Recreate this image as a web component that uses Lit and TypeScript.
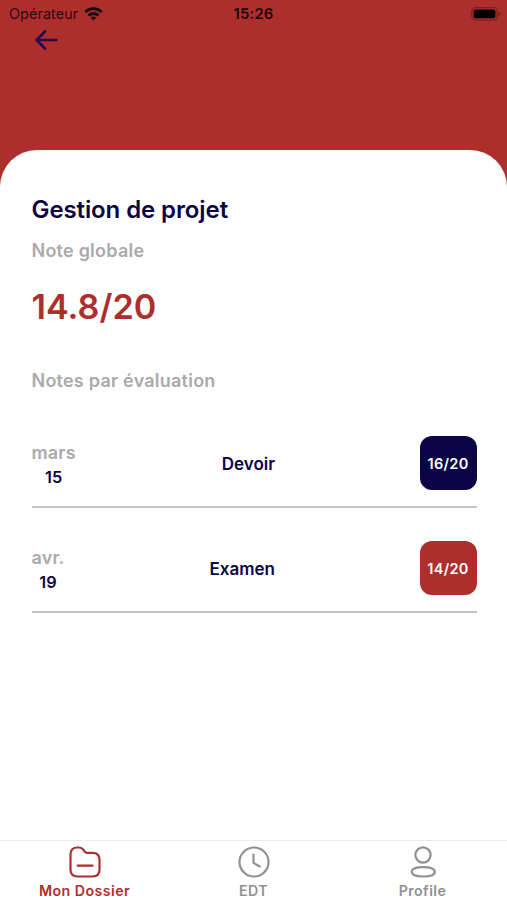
import { LitElement, html, css, svg } from "lit";
import { customElement, property } from "lit/decorators.js";

interface Grade {
  month: string;
  day: string;
  label: string;
  score: string;
  tone: string;
}

const grades: Grade[] = [
  { month: "mars", day: "15", label: "Devoir", score: "16/20", tone: "navy" },
  { month: "avr.", day: "19", label: "Examen", score: "14/20", tone: "red" },
];

@customElement("status-bar")
class StatusBar extends LitElement {
  static styles = css`
    :host { display: grid; grid-template-columns: 1fr auto 1fr; height: 27px; padding: 0 6px 0 9px; box-sizing: border-box; align-items: center; color: #1c0508; line-height: 27px; }
    .carrier { display: flex; align-items: center; gap: 6px; color: #30090d; font-size: 14.4px; letter-spacing: 0.08px; }
    .time { font-weight: 600; font-size: 14.8px; line-height: 26px; padding-top: 1px; letter-spacing: 0.2px; margin-right: 3px; }
    .battery { justify-self: end; }
    svg { display: block; }
  `;
  render() {
    return html`
      <div class="carrier">
        <span>Opérateur</span>
        <svg width="19" height="14" viewBox="0 0 19 14" fill="none" stroke="#16040a" stroke-width="2.8">
          <path d="M1.4 5a11.6 11.6 0 0 1 16.2 0"></path>
          <path d="M4.5 8.5a7.2 7.2 0 0 1 10 0"></path>
          <path d="M9.5 13.6 6.8 10.8a3.9 3.9 0 0 1 5.4 0Z" fill="#16040a" stroke="none"></path>
        </svg>
      </div>
      <span class="time">15:26</span>
      <svg class="battery" width="30" height="14" viewBox="0 0 30 14">
        <rect x="0.8" y="0.7" width="25.4" height="12.4" rx="3.8" fill="none" stroke="#7c1f21" stroke-width="1.3"></rect>
        <rect x="2.6" y="2.5" width="21.8" height="8.8" rx="2" fill="#050003"></rect>
        <path d="M27.4 4.8q1.8.6 1.8 2.1t-1.8 2.1Z" fill="#7c1f21"></path>
      </svg>
    `;
  }
}

@customElement("grade-row")
class GradeRow extends LitElement {
  @property({ attribute: false }) grade!: Grade;
  static styles = css`
    :host { display: flex; height: 105px; box-sizing: border-box; border-bottom: 2px solid #c4c4c6; padding-top: 33px; }
    .when { width: 100px; display: flex; }
    .date { display: flex; flex-direction: column; align-items: center; height: 54px; padding-top: 4px; box-sizing: border-box; font-weight: 600; }
    .month { font-size: 18px; line-height: 25px; color: #aaaaab; letter-spacing: 0.15px; }
    .day { font-size: 16.3px; line-height: 24px; color: #0b0445; }
    .name { width: 143.5px; text-align: right; font-size: 17px; line-height: 56px; font-weight: 600; color: #0b0445; }
    .score { margin-left: auto; width: 57px; height: 54px; border-radius: 12px; color: #fff; font-size: 14.5px; line-height: 55px; letter-spacing: 0.3px; font-weight: 600; text-align: center; }
    .navy { background: #0b0445; }
    .red { background: #ad2f2d; }
  `;
  render() {
    const g = this.grade;
    return html`
      <div class="when">
        <div class="date"><span class="month">${g.month}</span><span class="day">${g.day}</span></div>
      </div>
      <div class="name">${g.label}</div>
      <div class="score ${g.tone}">${g.score}</div>
    `;
  }
}

const folderIcon = svg`
  <path d="M1.5 8.5Q1.5 1.5 8.5 1.5h1.7c2.5 0 3.2.8 4.4 2.5l.9 1.3c.8 1.1 1.6 1.5 3 1.5h5Q30.5 6.8 30.5 13.5V23.5Q30.5 30.5 23.5 30.5H8.5Q1.5 30.5 1.5 23.5Z"></path>
  <path d="M8.7 19.7H23.5"></path>`;
const clockIcon = svg`
  <circle cx="16" cy="16" r="14.5"></circle>
  <path d="M15.5 8.7V16.9L21.7 20.5"></path>`;
const profileIcon = svg`
  <circle cx="16" cy="9" r="7.6"></circle>
  <path d="M4.7 25.7C4.7 22.6 8.5 21.1 16 21.1S27.800 22.600 27.8 25.7 23.7 30.5 16 30.5 4.7 28.9 4.7 25.7Z"></path>`;

const tabs = [
  { label: "Mon Dossier", icon: folderIcon, active: true },
  { label: "EDT", icon: clockIcon, active: false },
  { label: "Profile", icon: profileIcon, active: false },
];

@customElement("tab-bar")
class TabBar extends LitElement {
  static styles = css`
    :host { display: grid; grid-template-columns: repeat(3, 1fr); height: 60px; box-sizing: border-box; border-top: 1px solid #ececec; background: #fff; }
    .tab { display: flex; flex-direction: column; align-items: center; padding-top: 5px; color: #919191; font-size: 14.2px; font-weight: 600; line-height: 18px; letter-spacing: 0.45px; gap: 4px; white-space: nowrap; }
    .active { color: #ad2f2d; }
    svg { display: block; width: 32px; height: 32px; fill: none; stroke: currentColor; stroke-width: 2.2; stroke-linecap: round; stroke-linejoin: round; margin-left: 1px; }
  `;
  render() {
    return tabs.map((t) => html`
      <div class="tab ${t.active ? "active" : ""}">
        <svg viewBox="0 0 32 32">${t.icon}</svg>
        <span>${t.label}</span>
      </div>`);
  }
}

@customElement("app-root")
class AppRoot extends LitElement {
  static styles = css`
    :host { display: flex; flex-direction: column; height: 900px; background: #ad2f2d; font-family: Inter, "Liberation Sans", sans-serif; overflow: hidden; }
    .header { height: 150px; flex: none; }
    .back { display: block; margin: 3px 0 0 35px; }
    .sheet { flex: 1; background: #fff; border-radius: 37px 37px 0 0; padding: 45px 30.5px 0 31.5px; font-weight: 600; white-space: nowrap; }
    .title { font-size: 24px; line-height: 30px; color: #0b0445; letter-spacing: -0.1px; }
    .caption { font-size: 18px; line-height: 24px; color: #aaaaab; letter-spacing: 0.23px; }
    .first { margin-top: 14px; }
    .total { margin-top: 23px; font-size: 34.2px; line-height: 42px; color: #ad2f2d; }
    .second { margin-top: 41px; }
    .list { margin-top: 10px; }
  `;
  render() {
    return html`
      <div class="header">
        <status-bar></status-bar>
        <svg class="back" width="23" height="20" viewBox="0 0 23 20" fill="none" stroke="#260a50" stroke-width="2.6" stroke-linecap="round" stroke-linejoin="round">
          <path d="M10 1.5 1.5 10l8.5 8.5M2 10h19.2"></path>
        </svg>
      </div>
      <div class="sheet">
        <div class="title">Gestion de projet</div>
        <div class="caption first">Note globale</div>
        <div class="total">14.8/20</div>
        <div class="caption second">Notes par évaluation</div>
        <div class="list">${grades.map((g) => html`<grade-row .grade=${g}></grade-row>`)}</div>
      </div>
      <tab-bar></tab-bar>
    `;
  }
}
